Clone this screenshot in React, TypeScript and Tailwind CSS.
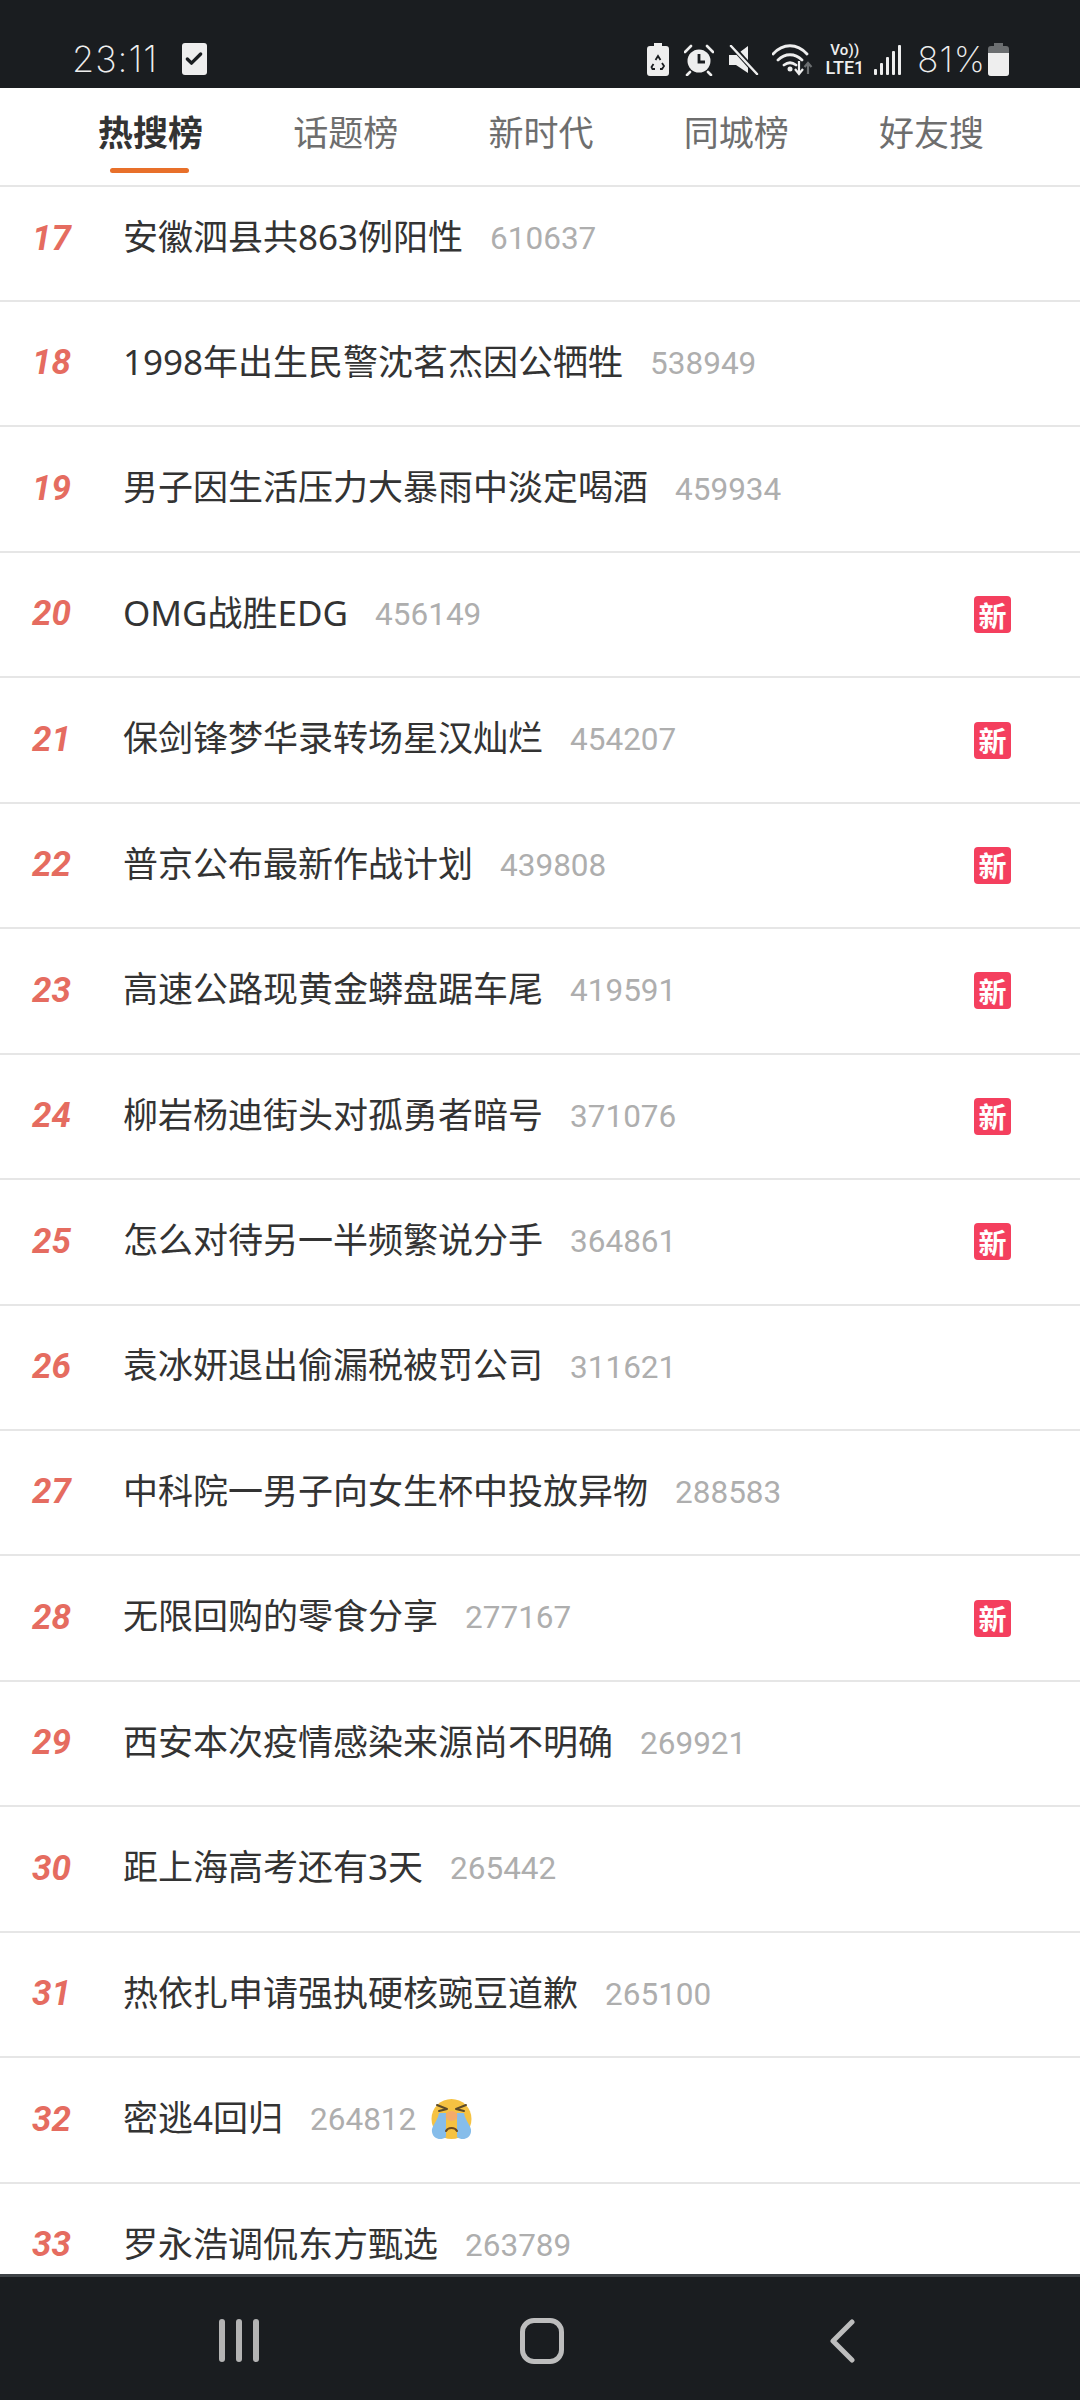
import React from 'react';
import { Check } from 'lucide-react';

type Row = { rank: number; title: string; count: string; isNew?: boolean; emoji?: boolean };

const rows: Row[] = [
  { rank: 18, title: '1998年出生民警沈茗杰因公牺牲', count: '538949' },
  { rank: 19, title: '男子因生活压力大暴雨中淡定喝酒', count: '459934' },
  { rank: 20, title: 'OMG战胜EDG', count: '456149', isNew: true },
  { rank: 21, title: '保剑锋梦华录转场星汉灿烂', count: '454207', isNew: true },
  { rank: 22, title: '普京公布最新作战计划', count: '439808', isNew: true },
  { rank: 23, title: '高速公路现黄金蟒盘踞车尾', count: '419591', isNew: true },
  { rank: 24, title: '柳岩杨迪街头对孤勇者暗号', count: '371076', isNew: true },
  { rank: 25, title: '怎么对待另一半频繁说分手', count: '364861', isNew: true },
  { rank: 26, title: '袁冰妍退出偷漏税被罚公司', count: '311621' },
  { rank: 27, title: '中科院一男子向女生杯中投放异物', count: '288583' },
  { rank: 28, title: '无限回购的零食分享', count: '277167', isNew: true },
  { rank: 29, title: '西安本次疫情感染来源尚不明确', count: '269921' },
  { rank: 30, title: '距上海高考还有3天', count: '265442' },
  { rank: 31, title: '热依扎申请强执硬核豌豆道歉', count: '265100' },
  { rank: 32, title: '密逃4回归', count: '264812', emoji: true },
];

const tabs = ['热搜榜', '话题榜', '新时代', '同城榜', '好友搜'];

const CryingFace = () => (
  <svg width="43" height="44" viewBox="0 0 43 44" className="ml-[14px] shrink-0">
    <circle cx="21.500" cy="21" r="20" fill="#f5c242" />
    <path d="M9 15h7v24c-5 4-13 2-14-5-1-6 5-9 7-19zM27 15h7c2 10 8 13 7 19-1 7-9 9-14 5z" fill="#86bdea" />
    <ellipse cx="21.500" cy="18" rx="6" ry="5" fill="#f2a17e" opacity="0.7" />
    <path d="M7 7l10 4-8 2M36 7l-10 4 8 2" fill="none" stroke="#5b4a2a" strokeWidth="2" strokeLinecap="round" strokeLinejoin="round" />
    <path d="M16 33c2-4 9-4 11 0" fill="none" stroke="#6b4a1f" strokeWidth="2" strokeLinecap="round" />
  </svg>
);

const StatusIcons = () => (
  <div className="flex items-center text-[#eeeeee]">
    {/* battery saver */}
    <svg width="22" height="33" viewBox="0 0 22 33" className="mr-[15px]">
      <path d="M7 0h8v3h4a3 3 0 0 1 3 3v24a3 3 0 0 1-3 3H3a3 3 0 0 1-3-3V6a3 3 0 0 1 3-3h4z" fill="currentColor" />
      <path d="M8.500 17l2.500-4 2.500 4M15 20l2 3-2 3h-2M8 26H5.500l-1-2 2-3" fill="none" stroke="#1a1d20" strokeWidth="1.800" />
    </svg>
    {/* alarm */}
    <svg width="30" height="32" viewBox="0 0 30 32" className="mr-[15px]">
      <circle cx="15" cy="17" r="11.500" fill="currentColor" />
      <path d="M15 10v8h6" fill="none" stroke="#1a1d20" strokeWidth="2.800" />
      <path d="M1 8l6-6M29 8l-6-6M6 28l-3 3M24 28l3 3" stroke="currentColor" strokeWidth="2.600" strokeLinecap="round" />
    </svg>
    {/* mute */}
    <svg width="30" height="30" viewBox="0 0 30 30" className="mr-[13px]">
      <path d="M0 10h7L19 1v27L7 20H0z" fill="currentColor" />
      <path d="M3 1l25 28" stroke="#1a1d20" strokeWidth="5" />
      <path d="M2 1l26 28" stroke="currentColor" strokeWidth="2.500" strokeLinecap="round" />
    </svg>
    {/* wifi */}
    <svg width="42" height="32" viewBox="0 0 42 32" className="mr-[11px]">
      <path d="M1 10c10-11 24-11 34 0M6 16c7-7 17-7 24 0M12 21c4-3 8-3 12 0" fill="none" stroke="currentColor" strokeWidth="2.800" strokeLinecap="round" />
      <circle cx="18" cy="25" r="2.500" fill="currentColor" />
      <path d="M27 17v12M23 25l4 5 4-5" fill="none" stroke="currentColor" strokeWidth="2.200" />
      <path d="M36 30V20M32.500 23l3.500-4 3.500 4" fill="none" stroke="#6b6e70" strokeWidth="2.200" />
    </svg>
    <div className="flex flex-col items-center mr-[10px] font-['Roboto',sans-serif] font-medium leading-none">
      <span className="text-[15px] h-[16px] tracking-[0.2px]">Vo))</span>
      <span className="text-[18px] h-[17px]">LTE1</span>
    </div>
    {/* signal */}
    <svg width="27" height="30" viewBox="0 0 27 30" className="mr-[16px]">
      <rect x="0" y="24" width="3" height="6" rx="1" fill="currentColor" />
      <rect x="6" y="18" width="3" height="12" rx="1" fill="currentColor" />
      <rect x="12" y="12" width="3" height="18" rx="1" fill="currentColor" />
      <rect x="18" y="6" width="3" height="24" rx="1" fill="currentColor" />
      <rect x="24" y="0" width="3" height="30" rx="1" fill="currentColor" />
    </svg>
    <span className="text-[35px] leading-none font-extralight font-['Inter',sans-serif] tracking-[1px]">81%</span>
    {/* battery */}
    <svg width="21" height="33" viewBox="0 0 21 33" className="ml-[2px]">
      <path d="M6 0h9v3h3a3 3 0 0 1 3 3v24a3 3 0 0 1-3 3H3a3 3 0 0 1-3-3V6a3 3 0 0 1 3-3h3z" fill="#6b6e70" />
      <path d="M0 10h21v20a3 3 0 0 1-3 3H3a3 3 0 0 1-3-3z" fill="currentColor" />
    </svg>
  </div>
);

const HotRow = ({ rank, title, count, isNew, emoji, clipped }: Row & { clipped?: boolean }) => (
  <div className={`flex items-center shrink-0 pl-[32px] pr-[69px] ${clipped ? '' : 'h-[125.45px] border-b-2 border-[#e6e6e6]'}`}>
    <span className="w-[91px] shrink-0 text-[35px] font-bold italic text-[#e56c60] font-['Roboto',sans-serif]">{rank}</span>
    <span className="mb-[3px] text-[35px] text-[#333333] whitespace-nowrap font-['Noto_Sans','Noto_Sans_CJK_SC',sans-serif]">{title}</span>
    <span className="ml-[27px] text-[31.500px] text-[#aeaeae] font-['Roboto',sans-serif]">{count}</span>
    {emoji && <CryingFace />}
    {isNew && (
      <span className="ml-auto w-[37px] h-[37px] rounded-[4px] bg-[#f43f5e] text-white text-[28px] font-bold flex items-center justify-center leading-none font-['Noto_Sans_CJK_SC',sans-serif]">
        新
      </span>
    )}
  </div>
);

export default function App() {
  return (
    <div className="w-[1080px] h-[2400px] flex flex-col bg-white overflow-hidden font-['Roboto','Noto_Sans_CJK_SC',sans-serif]">
      <div className="h-[88px] shrink-0 bg-[#1a1d20] flex items-end justify-between pl-[72px] pr-[71px] pb-[11px]">
        <div className="flex items-center">
          <span className="text-[36px] leading-none text-[#eeeeee] font-extralight font-['Inter',sans-serif] tracking-[1px]">23:11</span>
          <span className="ml-[24px] w-[25px] h-[32px] rounded-[3px] bg-[#eeeeee] flex items-center justify-center">
            <Check size={20} strokeWidth={4} className="text-[#1a1d20]" />
          </span>
        </div>
        <StatusIcons />
      </div>

      <div className="h-[99px] shrink-0 border-b-2 border-[#e6e6e6] flex justify-between pl-[98px] pr-[96px]">
        {tabs.map((tab, i) => (
          <div key={tab} className="relative flex items-start pt-[20px]">
            <span className={`text-[35px] leading-[46px] font-['Noto_Sans_CJK_SC',sans-serif] ${i === 0 ? 'font-bold text-[#333333]' : 'text-[#6e6e6e]'}`}>
              {tab}
            </span>
            {i === 0 && <span className="absolute left-[12px] bottom-[12px] w-[79px] h-[5px] rounded-full bg-[#e8702a]" />}
          </div>
        ))}
      </div>

      <div className="flex-1 min-h-0 flex flex-col overflow-hidden">
        <div className="h-[115px] shrink-0 border-b-2 border-[#e6e6e6] flex items-center pl-[32px] pb-[9px]">
          <span className="w-[91px] shrink-0 text-[35px] font-bold italic text-[#e56c60] font-['Roboto',sans-serif]">17</span>
          <span className="mb-[3px] text-[35px] text-[#333333] whitespace-nowrap font-['Noto_Sans','Noto_Sans_CJK_SC',sans-serif]">安徽泗县共863例阳性</span>
          <span className="ml-[27px] text-[31.500px] text-[#aeaeae]">610637</span>
        </div>
        {rows.map(row => (
          <HotRow key={row.rank} {...row} />
        ))}
        <div className="pt-[34px]">
          <HotRow rank={33} title="罗永浩调侃东方甄选" count="263789" clipped />
        </div>
      </div>

      <div className="h-[126px] shrink-0 bg-[#1a1d20] border-t-[3px] border-[#3f4347] flex items-center justify-between pl-[219px] pr-[225px] pt-[4px]">
        <div className="flex gap-[11px]">
          <span className="w-[6px] h-[43px] rounded-full bg-[#b4b4b4]" />
          <span className="w-[6px] h-[43px] rounded-full bg-[#b4b4b4]" />
          <span className="w-[6px] h-[43px] rounded-full bg-[#b4b4b4]" />
        </div>
        <span className="ml-[-4px] w-[44px] h-[46px] rounded-[14px] border-[5px] border-[#bdbdbd]" />
        <svg width="26" height="44" viewBox="0 0 26 44">
          <path d="M23 3L4 22l19 19" fill="none" stroke="#bdbdbd" strokeWidth="5" strokeLinecap="round" strokeLinejoin="round" />
        </svg>
      </div>
    </div>
  );
}
